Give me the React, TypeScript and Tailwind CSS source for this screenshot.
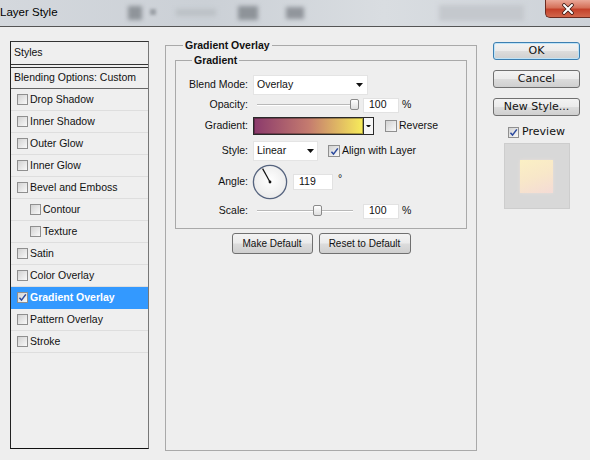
import React from "react";

function Check({ checked = false, big = false }: { checked?: boolean; big?: boolean }) {
  return (
    <span
      className={
        "relative inline-flex shrink-0 items-center justify-center border border-[#8f8f8f] bg-[linear-gradient(135deg,#d2d2d2,#f9f9f9)] " +
        (big ? "w-[12px] h-[12px]" : "w-[11px] h-[11px]")
      }
    >
      {checked && (
        <svg viewBox="0 0 10 10" className="w-[9px] h-[9px]">
          <path d="M1.6 5.3 L3.9 7.9 L8.7 1.5" fill="none" stroke="#2c4a9e" strokeWidth="1.7" />
        </svg>
      )}
    </span>
  );
}

function Arrow({ w = 7 }: { w?: number }) {
  return (
    <svg viewBox="0 0 7 4" width={w} height={(w * 4) / 7}>
      <path d="M0 0H7L3.5 4Z" fill="#111" />
    </svg>
  );
}

function ListRow({
  label,
  indent = false,
  selected = false,
}: {
  label: string;
  indent?: boolean;
  selected?: boolean;
}) {
  return (
    <div
      className={
        "flex h-[22px] items-center border-b " +
        (selected ? "bg-[#3399ff] border-[#3399ff] text-white font-bold" : "border-[#dedede] text-[#111]") +
        (indent ? " pl-[19px]" : " pl-[6px]")
      }
    >
      <Check checked={selected} />
      <span className="ml-[2px] leading-none">{label}</span>
    </div>
  );
}

function Btn({ children, ok = false, className = "" }: { children: React.ReactNode; ok?: boolean; className?: string }) {
  return (
    <div
      className={
        "flex items-center justify-center rounded-[3px] border bg-[linear-gradient(#f3f3f3,#ebebeb_48%,#dcdcdc_52%,#cfcfcf)] text-[#111] " +
        (ok ? "border-[#3c7fb1] shadow-[inset_0_0_0_1px_#bfe3f7] " : "border-[#707070] ") +
        className
      }
    >
      {children}
    </div>
  );
}

function Slider({ thumb }: { thumb: string }) {
  return (
    <div className="relative flex h-[14px] w-[106px] items-center">
      <div className="ml-[4px] h-[2px] w-[96px] border-b border-white bg-[#b9b9b9]" />
      <div
        className={
          "absolute top-[1px] h-[11px] w-[9px] rounded-[2px] border border-[#8a8a8a] bg-[linear-gradient(#ffffff,#dedede)] " +
          thumb
        }
      />
    </div>
  );
}

function Field({ value, w, h }: { value: string; w: string; h: string }) {
  return (
    <div className={"flex items-center border border-[#e2e2e2] bg-white pl-[5px] text-[#111] " + w + " " + h}>
      {value}
    </div>
  );
}

export default function App() {
  const items: { label: string; indent?: boolean; selected?: boolean }[] = [
    { label: "Drop Shadow" },
    { label: "Inner Shadow" },
    { label: "Outer Glow" },
    { label: "Inner Glow" },
    { label: "Bevel and Emboss" },
    { label: "Contour", indent: true },
    { label: "Texture", indent: true },
    { label: "Satin" },
    { label: "Color Overlay" },
    { label: "Gradient Overlay", selected: true },
    { label: "Pattern Overlay" },
    { label: "Stroke" },
  ];

  return (
    <div className="h-[460px] w-[590px] overflow-hidden bg-[#eeeeee] font-['Liberation_Sans',Arial,sans-serif] text-[10.5px] text-[#111]">
      {/* Title bar */}
      <div className="flex h-[27px] items-start border-b border-[#555] bg-[linear-gradient(90deg,#d4d8dd,#cbd0d6_35%,#d9dde1_65%,#cdd2d8)]">
        <div className="flex h-[26px] items-center text-[11.5px] leading-none text-black">Layer Style</div>
        <div className="ml-[70px] mt-[6px] h-[14px] w-[14px] bg-[#8f949a] blur-[2px]" />
        <div className="ml-[8px] mt-[9px] h-[6px] w-[6px] bg-[#9ca1a7] blur-[1.5px]" />
        <div className="ml-[20px] mt-[9px] h-[7px] w-[40px] bg-[#bcc1c6] blur-[2px]" />
        <div className="ml-[22px] mt-[6px] h-[14px] w-[20px] bg-[#8e9399] blur-[2px]" />
        <div className="ml-[28px] mt-[7px] h-[12px] w-[18px] bg-[#91969c] blur-[2px]" />
        <div className="ml-[135px] mt-[5px] h-[16px] w-[85px] bg-[#c4c8cd] blur-[2px]" />
        <div className="ml-auto flex h-[18px] w-[45px] items-center justify-center rounded-bl-[5px] border-b border-l border-[#6b2b20] bg-[linear-gradient(#eaa898,#d5715a_45%,#c4412a_55%,#d2664b)]">
          <svg viewBox="0 0 14 12" width="14" height="12">
            <path d="M3 2 L11 10 M11 2 L3 10" stroke="#3a1a14" strokeWidth="3.6" strokeLinecap="round" />
            <path d="M3 2 L11 10 M11 2 L3 10" stroke="#ffffff" strokeWidth="2" strokeLinecap="round" />
          </svg>
        </div>
      </div>

      {/* Body */}
      <div className="flex items-start pl-[10px] pt-[14px]">
        {/* Styles list */}
        <div className="h-[408px] w-[139px] border border-b-[#111] border-l-[#222] border-r-[#777] border-t-[#333] bg-[#efefef]">
          <div className="flex h-[23px] items-center border-b border-[#333] pl-[3px]">Styles</div>
          <div className="h-[2px]" />
          <div className="flex h-[22px] items-center border-b border-t border-b-[#666] border-t-[#333] pl-[3px]">
            Blending Options: Custom
          </div>
          {items.map((it) => (
            <ListRow key={it.label} label={it.label} indent={it.indent} selected={it.selected} />
          ))}
        </div>

        {/* Middle group */}
        <div className="ml-[16px] mt-[4px] flex h-[406px] w-[312px] flex-col border border-[#a9a9a9]">
          <div className="-mt-[7px] ml-[17px] w-fit bg-[#eeeeee] px-[2px] font-bold leading-[13px]">Gradient Overlay</div>

          <div className="mx-[9px] mt-[8px] flex flex-col border border-[#a9a9a9] pb-[5px]">
            <div className="-mt-[7px] ml-[16px] w-fit bg-[#eeeeee] px-[2px] font-bold leading-[13px]">Gradient</div>

            <div className="mt-[7px] flex flex-col">
              {/* Blend Mode */}
              <div className="flex h-[22px] items-center">
                <div className="w-[72px] text-right">Blend Mode:</div>
                <div className="ml-[5px] flex h-[20px] w-[115px] items-center justify-between border border-[#e4e4e4] bg-white pl-[3px] pr-[4px]">
                  <span>Overlay</span>
                  <Arrow />
                </div>
              </div>
              {/* Opacity */}
              <div className="flex h-[18px] items-center">
                <div className="w-[72px] text-right">Opacity:</div>
                <div className="ml-[5px] flex items-center">
                  <Slider thumb="left-[97px]" />
                  <div className="ml-[4px]">
                    <Field value="100" w="w-[36px]" h="h-[15px]" />
                  </div>
                  <span className="ml-[3px]">%</span>
                </div>
              </div>
              {/* Gradient */}
              <div className="flex h-[24px] items-center">
                <div className="w-[72px] text-right">Gradient:</div>
                <div className="ml-[5px] flex h-[18px] items-stretch border border-[#2a2a2a]">
                  <div className="w-[109px] bg-[linear-gradient(90deg,#8b3a6c,#c47b6f_50%,#f7ec5a)] shadow-[inset_0_0_0_1px_rgba(0,0,0,0.3)]" />
                  <div className="flex w-[10px] items-center justify-center border-l border-[#2a2a2a] bg-[#f6f6f6]">
                    <Arrow w={5} />
                  </div>
                </div>
                <div className="ml-[11px] flex items-center">
                  <Check big />
                  <span className="ml-[2px]">Reverse</span>
                </div>
              </div>
              {/* Style */}
              <div className="flex h-[26px] items-center">
                <div className="w-[72px] text-right">Style:</div>
                <div className="ml-[5px] flex h-[20px] w-[65px] items-center justify-between border border-[#e4e4e4] bg-white pl-[3px] pr-[3px]">
                  <span>Linear</span>
                  <Arrow />
                </div>
                <div className="ml-[10px] flex items-center">
                  <Check big checked />
                  <span className="ml-[2px]">Align with Layer</span>
                </div>
              </div>
              {/* Angle */}
              <div className="flex h-[35px] items-center">
                <div className="w-[72px] text-right">Angle:</div>
                <div className="ml-[4px] flex items-center">
                  <svg viewBox="0 0 36 36" width="36" height="36">
                    <defs>
                      <radialGradient id="dialfill" cx="50%" cy="45%" r="60%">
                        <stop offset="0%" stopColor="#ffffff" />
                        <stop offset="100%" stopColor="#e9e9e9" />
                      </radialGradient>
                    </defs>
                    <circle cx="18" cy="18" r="16.6" fill="url(#dialfill)" stroke="#56647f" strokeWidth="1.3" />
                    <line x1="18" y1="18" x2="10.6" y2="4.6" stroke="#111" strokeWidth="1.2" />
                    <circle cx="18" cy="18" r="1.4" fill="#111" />
                  </svg>
                  <div className="ml-[5px]">
                    <Field value="119" w="w-[40px]" h="h-[16px]" />
                  </div>
                  <span className="mb-[6px] ml-[5px]">°</span>
                </div>
              </div>
              {/* Scale */}
              <div className="flex h-[24px] items-center">
                <div className="w-[72px] text-right">Scale:</div>
                <div className="ml-[5px] flex items-center">
                  <Slider thumb="left-[60px]" />
                  <div className="ml-[4px]">
                    <Field value="100" w="w-[36px]" h="h-[15px]" />
                  </div>
                  <span className="ml-[3px]">%</span>
                </div>
              </div>
            </div>
          </div>

          <div className="mt-[4px] flex justify-center gap-[6px] text-[10px]">
            <Btn className="h-[21px] w-[81px]">Make Default</Btn>
            <Btn className="h-[21px] w-[92px]">Reset to Default</Btn>
          </div>
        </div>

        {/* Right column */}
        <div className="ml-[16px] mt-[1px] flex w-[87px] flex-col items-center font-['DejaVu_Sans',Verdana,sans-serif] text-[11px]">
          <Btn ok className="h-[18px] w-full">OK</Btn>
          <Btn className="mt-[10px] h-[18px] w-full">Cancel</Btn>
          <Btn className="mt-[10px] h-[18px] w-full">New Style...</Btn>
          <div className="mt-[8px] flex h-[16px] items-center">
            <Check checked />
            <span className="ml-[3px]">Preview</span>
          </div>
          <div className="mt-[3px] flex h-[66px] w-[66px] items-center justify-center border border-[#cdcdcd] bg-[#d8d8d8]">
            <div className="h-[33px] w-[33px] bg-[linear-gradient(160deg,#fbf0c4,#f8e7c9_50%,#f4dbd6)] shadow-[0_0_3px_#e9e0d8]" />
          </div>
        </div>
      </div>
    </div>
  );
}
